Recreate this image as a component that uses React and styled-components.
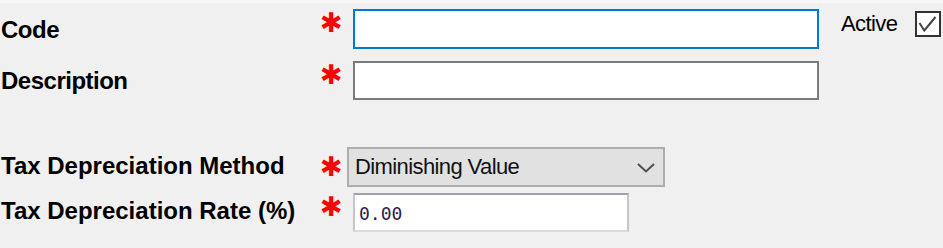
import React from "react";
import styled, { createGlobalStyle } from "styled-components";

const GlobalStyle = createGlobalStyle`
  html, body {
    margin: 0;
    background: #f0f0f0;
  }
  body {
    font-family: "Liberation Sans", Arial, sans-serif;
  }
`;

function App() {
  return (
    <Page>
      <GlobalStyle />
      <Row $top={0}>
        <FieldLabel $pt={9} $ls={-0.5}>Code</FieldLabel>
        <Required $pt={4}>✱</Required>
        <TextBox $width={466} $border="#0078d7" />
        <ActiveLabel>Active</ActiveLabel>
        <CheckBox>
          <svg width="22" height="22" viewBox="0 0 22 22">
            <polyline
              points="2.5,10 7.3,17.5 18.5,4"
              fill="none"
              stroke="#444"
              strokeWidth="2"
            />
          </svg>
        </CheckBox>
      </Row>
      <Row $top={12}>
        <FieldLabel $pt={8} $ls={-0.5}>Description</FieldLabel>
        <Required $pt={4}>✱</Required>
        <TextBox $width={466} $border="#7a7a7a" $height={39} />
      </Row>
      <Row $top={47}>
        <FieldLabel $pt={7}>Tax Depreciation Method</FieldLabel>
        <Required $pt={10}>✱</Required>
        <ComboBox>
          <ComboText>Diminishing Value</ComboText>
          <svg width="18" height="10" viewBox="0 0 18 10">
            <polyline
              points="1,1 9,8.5 17,1"
              fill="none"
              stroke="#505050"
              strokeWidth="2"
            />
          </svg>
        </ComboBox>
      </Row>
      <Row $top={6}>
        <FieldLabel $pt={6}>Tax Depreciation Rate (%)</FieldLabel>
        <Required $pt={4}>✱</Required>
        <NumberBox>0.00</NumberBox>
      </Row>
    </Page>
  );
}

const Page = styled.div`
  box-sizing: border-box;
  width: 943px;
  height: 248px;
  padding-top: 6px;
  border-top: 3px solid #f7f7f7;
  background: #f0f0f0;
  overflow: hidden;
`;

const Row = styled.div`
  display: flex;
  align-items: flex-start;
  margin-top: ${(props) => props.$top}px;
`;

const FieldLabel = styled.div`
  box-sizing: border-box;
  flex: none;
  width: 321px;
  padding-left: 1px;
  padding-top: ${(props) => props.$pt}px;
  font-weight: 700;
  font-size: 24px;
  line-height: 24px;
  letter-spacing: ${(props) => props.$ls || 0}px;
  color: #000;
  white-space: nowrap;
`;

const Required = styled.div`
  flex: none;
  width: 26px;
  height: 20px;
  margin-top: ${(props) => props.$pt}px;
  text-indent: -1px;
  font-family: "DejaVu Sans", sans-serif;
  font-size: 27px;
  line-height: 20px;
  color: #ff0000;
  overflow: visible;
`;

const TextBox = styled.div`
  box-sizing: border-box;
  flex: none;
  width: ${(props) => props.$width}px;
  height: ${(props) => props.$height || 40}px;
  margin-left: 6px;
  border: 2px solid ${(props) => props.$border};
  background: #fff;
`;

const ActiveLabel = styled.div`
  margin-left: 22px;
  padding-top: 4px;
  font-size: 22px;
  line-height: 22px;
  letter-spacing: -0.6px;
  color: #000;
`;

const CheckBox = styled.div`
  box-sizing: border-box;
  width: 26px;
  height: 26px;
  margin-top: 2px;
  margin-left: 18px;
  border: 2px solid #333;
  background: #fff;

  svg {
    display: block;
  }
`;

const ComboBox = styled.div`
  box-sizing: border-box;
  display: flex;
  align-items: center;
  justify-content: space-between;
  width: 318px;
  height: 40px;
  padding: 0 8px 0 6px;
  border: 2px solid #adadad;
  background: #e1e1e1;

  svg {
    display: block;
    margin-top: 2px;
  }
`;

const ComboText = styled.span`
  font-size: 22px;
  line-height: 22px;
  letter-spacing: -0.6px;
  color: #111;
`;

const NumberBox = styled.div`
  box-sizing: border-box;
  width: 276px;
  height: 39px;
  margin-left: 6px;
  padding: 10px 0 0 4px;
  border-style: solid;
  border-width: 2px;
  border-color: #a0a0a8 #c4c4cc #dadae0 #c4c4cc;
  background: #fff;
  font-family: "DejaVu Sans Mono", "Liberation Mono", monospace;
  font-size: 18px;
  line-height: 18px;
  color: #2d1b4e;
`;

export default App;
